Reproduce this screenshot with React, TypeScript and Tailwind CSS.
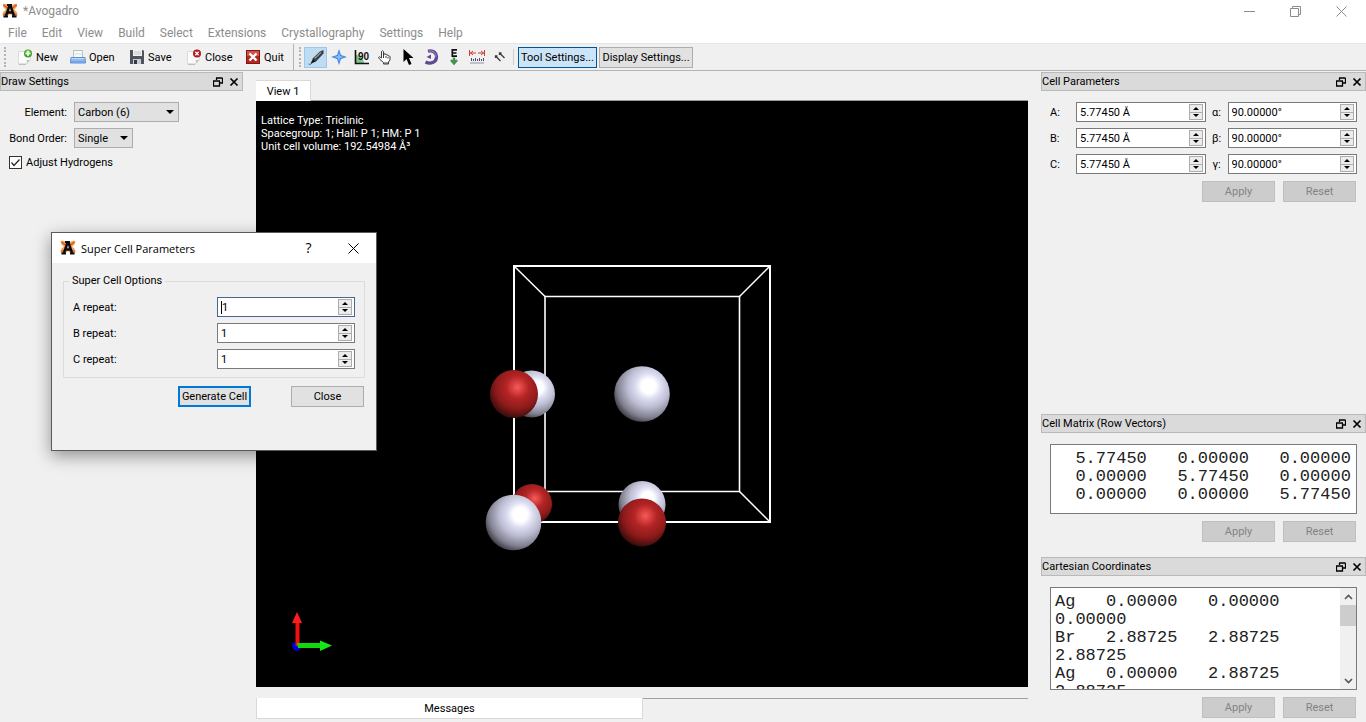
import React, { useState } from "react";

const MENUS = [
  "File",
  "Edit",
  "View",
  "Build",
  "Select",
  "Extensions",
  "Crystallography",
  "Settings",
  "Help",
];

const MATRIX = `  5.77450   0.00000   0.00000
  0.00000   5.77450   0.00000
  0.00000   0.00000   5.77450`;

const COORDINATES = `Ag   0.00000   0.00000   0.00000
Br   2.88725   2.88725   2.88725
Ag   0.00000   2.88725   2.88725
Br   2.88725   0.00000   0.00000
Ag   2.88725   0.00000   2.88725
Br   0.00000   2.88725   0.00000
Ag   2.88725   2.88725   0.00000
Br   0.00000   0.00000   2.88725`;

function Logo() {
  return (
    <svg width="16" height="16" viewBox="0 0 16 16" aria-hidden="true">
      <path
        d="M1 1c2-1 4 0 7 3 3-3 5-4 7-3 1 2-1 4-3 6 3 1 4 4 3 6-2 2-5 0-7-2-2 2-5 4-7 2-1-2 0-5 3-6C2 5 0 3 1 1Z"
        fill="#f0a05a"
      />
      <path d="M1.500 2l4 3M14.500 2l-4 3M1.500 12l3-2M14.500 12l-3-2" stroke="#c9601f" strokeWidth="1.500" />
      <path d="M4 13 7.500 2.500h1L12 13M5.500 9.500h5" fill="none" stroke="#0b0b14" strokeWidth="2.400" />
      <path d="M1.500 13.500h4.500M10 13.500h4.500M5 2h5" stroke="#0b0b14" strokeWidth="1.800" />
    </svg>
  );
}

function PageShape() {
  return (
    <>
      <path d="M1.500 2.500h12v8l-4 4.500h-8z" fill="#fbfbfb" stroke="#dcdcdc" strokeWidth="1" />
      <path d="M13.500 10.500c-1 .5-2.500.5-4 .5.500 1.500.5 3 0 4z" fill="#c2c2c2" />
      <path d="M2 15.300h7" stroke="#b5b5b5" strokeWidth="1" />
    </>
  );
}

function NewIcon() {
  return (
    <svg width="16" height="16" viewBox="0 0 16 16" aria-hidden="true">
      <PageShape />
      <circle cx="11" cy="4.500" r="4" fill="#3fa32c" />
      <circle cx="11" cy="3.500" r="2.500" fill="#7fd063" />
      <path d="M11 2v5M8.500 4.500h5" stroke="#fff" strokeWidth="1.500" />
    </svg>
  );
}

function OpenIcon() {
  return (
    <svg width="16" height="16" viewBox="0 0 16 16" aria-hidden="true">
      <path d="M3.500 9V1.500h9V9" fill="#fafafa" stroke="#b9bcc2" />
      <path d="M3.500 5h9" stroke="#d8dadd" />
      <path d="M1 8.500h14l.5 5.500h-15z" fill="#8fbbf1" stroke="#5b8dd6" />
      <path d="M1.500 9.500h13" stroke="#c4dcfa" />
      <path d="M1.500 12.500h13" stroke="#6fa3e6" />
    </svg>
  );
}

function SaveIcon() {
  return (
    <svg width="16" height="16" viewBox="0 0 16 16" aria-hidden="true">
      <path d="M1 1h13l1 1v13H1z" fill="#4d5560" />
      <path d="M4 1h9v6H4z" fill="#f3f3f3" />
      <path d="M5 3h7M5 5h7" stroke="#c4c4c4" />
      <path d="M4 10h8v5H4z" fill="#c9ccd0" />
      <path d="M5 11h3v4H5z" fill="#343a42" />
    </svg>
  );
}

function CloseFileIcon() {
  return (
    <svg width="16" height="16" viewBox="0 0 16 16" aria-hidden="true">
      <PageShape />
      <circle cx="11" cy="4.500" r="4" fill="#b01c1c" />
      <path d="M9.300 2.800l3.400 3.400M12.700 2.800 9.300 6.200" stroke="#fff" strokeWidth="1.300" />
    </svg>
  );
}

function QuitIcon() {
  return (
    <svg width="16" height="16" viewBox="0 0 16 16" aria-hidden="true">
      <rect x="1.500" y="1.500" width="13" height="13" fill="#b5261d" stroke="#7f1610" />
      <path d="M2 2h12v5H2z" fill="#cf5148" />
      <path d="M4.500 4.500l7 7M11.500 4.500l-7 7" stroke="#fff" strokeWidth="2.400" />
    </svg>
  );
}

const FILE_ACTIONS = [
  { label: "New", icon: <NewIcon />, width: "w-[53px]" },
  { label: "Open", icon: <OpenIcon />, width: "w-[59px]" },
  { label: "Save", icon: <SaveIcon />, width: "w-[57px]" },
  { label: "Close", icon: <CloseFileIcon />, width: "w-[59px]" },
  { label: "Quit", icon: <QuitIcon />, width: "w-[44px]" },
];

const TOOLS = [
  {
    name: "Draw",
    icon: (
      <>
        <path d="M.5 15c1.500 1 3 0 4-1.500" stroke="#666" fill="none" />
        <path d="M4.500 9.500 12 2.500 15.500 1 15.500 4.500 8 12.500z" fill="#363d43" />
        <path d="M6.500 9.500 13 3.500" stroke="#8f9aa3" strokeWidth="1.300" />
        <path d="M5 9.500 8 12.500 2.500 14.800z" fill="#15191c" />
      </>
    ),
  },
  {
    name: "Navigate",
    icon: (
      <>
        <path d="M8 0l2 6 6 2-6 2-2 6-2-6-6-2 6-2z" fill="#3d86e8" />
        <path d="M8 3l1 4 4 1-4 1-1 4-1-4-4-1 4-1z" fill="#8fbdf7" />
      </>
    ),
  },
  {
    name: "Bond Centric",
    icon: (
      <>
        <path d="M2 14V6c4 0 7 3 8 8z" fill="#7cc488" />
        <path d="M1.500 1v13.500H15" fill="none" stroke="#111" strokeWidth="1.600" />
        <text x="4" y="11" fontSize="10" fontWeight="bold" fill="#111" fontFamily="Liberation Sans">
          90
        </text>
      </>
    ),
  },
  {
    name: "Manipulate",
    icon: (
      <path
        d="M4.500 8V2.500q1-1.500 2 0V7l.5-2q1-1 1.800.2l.4.800q1-.8 1.800.2l.3.800q1.500-.5 1.700.8V11l-1.500 2v2H6.500v-1.500L3 10.500 1.500 8.500q.5-1.300 2-.3l1 1zM6.500 7v2M9 7v2M11 8v1.500M7 14h5"
        fill="#fff"
        stroke="#3c3c3c"
        strokeWidth="1"
      />
    ),
  },
  {
    name: "Selection",
    icon: <path d="M3.500 0v13l3-3 2.500 6 2.500-1-2.500-6H13.500z" fill="#000" />,
  },
  {
    name: "Auto Rotate",
    icon: (
      <>
        <path d="M5 2.200C10 .8 14 4 13.500 8.500 13 13.500 7.500 15.500 2.500 13" fill="none" stroke="#5c4a94" strokeWidth="3.200" />
        <path d="M6 2c4-.5 7 2 7 6" fill="none" stroke="#9d90c8" strokeWidth="1" />
        <path d="M3.500 8 8 5.500V10z" fill="#5c4a94" />
      </>
    ),
  },
  {
    name: "Auto Optimization",
    icon: (
      <>
        <path d="M11 .8H6.300v6.400H11M6 4h4.500" fill="none" stroke="#111" strokeWidth="1.700" />
        <path d="M8 8.500v5M5 11l3 3.500 3-3.500" fill="none" stroke="#45924f" strokeWidth="2.400" />
      </>
    ),
  },
  {
    name: "Measure",
    icon: (
      <>
        <path d="M.5 1v6M15.500 1v6M1 4h6M9 4h6M4 2 1.500 4 4 6M12 2l2.500 2L12 6" fill="none" stroke="#d03b3b" />
        <path d="M2.500 9v3M4.500 10v2M6.500 9v3M8.500 10v2M10.500 9v3M12.500 10v2M14.500 9v3" stroke="#444d66" />
        <path d="M1 14h14" stroke="#8d93a3" />
      </>
    ),
  },
  {
    name: "Align",
    icon: (
      <path d="M3.500 7 8.500 12M7.500 4l5 5M3.500 9V7h2M7.500 6V4h2" stroke="#3a3a3a" strokeWidth="1.300" fill="none" />
    ),
  },
];

function Handle() {
  return <span className="h-5 w-[3px] border-l-2 border-dotted border-[#b4b4b4]" />;
}

function DockTitle({ title }: { title: string }) {
  return (
    <div className="flex h-[19px] items-center justify-between border border-[#b9b9b9] bg-[#dadada] pr-[3px]">
      <h2>{title}</h2>
      <div className="flex items-center gap-[6px]">
        <button aria-label={`Float ${title}`}>
          <svg width="10" height="10" viewBox="0 0 10 10">
            <path d="M3 1h6.500M3.500 1v2M9.500 1v5H7M0 4h7M.5 4v5h6V4" fill="none" stroke="#000" strokeWidth="1.300" />
          </svg>
        </button>
        <button aria-label={`Close ${title}`}>
          <svg width="10" height="10" viewBox="0 0 10 10">
            <path d="M1.500 1.500l7 7M8.500 1.500l-7 7" stroke="#000" strokeWidth="1.700" />
          </svg>
        </button>
      </div>
    </div>
  );
}

function Steps({ label }: { label: string }) {
  return (
    <div className="flex h-4 w-[14px] shrink-0 flex-col border border-[#adadad] bg-[#ececec]">
      <button aria-label={`Increase ${label}`} className="flex flex-1 items-center justify-center border-b border-[#adadad]">
        <svg width="6" height="3" viewBox="0 0 6 3">
          <path d="M0 3 3 0 6 3z" />
        </svg>
      </button>
      <button aria-label={`Decrease ${label}`} className="flex flex-1 items-center justify-center">
        <svg width="6" height="3" viewBox="0 0 6 3">
          <path d="M0 0h6L3 3z" />
        </svg>
      </button>
    </div>
  );
}

function SpinBox({ id, label, value, active }: { id: string; label: string; value: string; active?: boolean }) {
  const [text, setText] = useState(value);
  return (
    <>
      <label htmlFor={id}>{label}:</label>
      <div
        className={
          "flex h-5 min-w-0 items-center border bg-white pr-[2px] pl-[3px] " +
          (active ? "border-[#46688f]" : "border-[#7a7a7a]")
        }
      >
        {active && <span className="h-[13px] w-px bg-black" />}
        <input
          id={id}
          className="min-w-0 flex-1 bg-transparent outline-none"
          value={text}
          onChange={(e) => setText(e.target.value)}
        />
        <Steps label={label} />
      </div>
    </>
  );
}

function Combo({ id, label, value, width }: { id: string; label: string; value: string; width: string }) {
  return (
    <>
      <label htmlFor={id} className="text-right whitespace-nowrap">
        {label}:
      </label>
      <div className={"relative " + width}>
        <select
          id={id}
          defaultValue={value}
          className="block h-5 w-full appearance-none border border-[#adadad] bg-[#e1e1e1] px-[3px] outline-none"
        >
          <option>{value}</option>
        </select>
        <svg className="pointer-events-none absolute top-2 right-[5px]" width="8" height="4" viewBox="0 0 8 4">
          <path d="M0 0h8L4 4z" />
        </svg>
      </div>
    </>
  );
}

function ApplyReset() {
  return (
    <div className="flex justify-end gap-2 pt-[7px] pr-px text-[#838383]">
      <button disabled className="h-[21px] w-[73px] border border-[#bfbfbf] bg-[#cccccc]">
        Apply
      </button>
      <button disabled className="h-[21px] w-[73px] border border-[#bfbfbf] bg-[#cccccc]">
        Reset
      </button>
    </div>
  );
}

function Scene() {
  return (
    <svg className="absolute inset-0 h-full w-full" viewBox="0 0 772 586" aria-label="Unit cell">
      <defs>
        <radialGradient id="silver" cx="0.62" cy="0.36" r="0.76">
          <stop offset="0" stopColor="#ffffff" />
          <stop offset="0.17" stopColor="#ffffff" />
          <stop offset="0.3" stopColor="#dedef2" />
          <stop offset="0.5" stopColor="#bcbcd2" />
          <stop offset="0.74" stopColor="#80808f" />
          <stop offset="1" stopColor="#121218" />
        </radialGradient>
        <radialGradient id="bromine" cx="0.57" cy="0.36" r="0.74">
          <stop offset="0" stopColor="#fa5a5a" />
          <stop offset="0.15" stopColor="#d84040" />
          <stop offset="0.32" stopColor="#b32424" />
          <stop offset="0.6" stopColor="#8e1b1b" />
          <stop offset="0.8" stopColor="#521010" />
          <stop offset="1" stopColor="#100202" />
        </radialGradient>
      </defs>

      {/* unit cell frame */}
      <g fill="none" stroke="#fff" strokeWidth="2">
        <path d="M258 165H514V421H258z" />
        <path d="M289 195.500H483.500V390.500H289z" strokeWidth="1.600" />
        <path d="M258 165l31 30.500M514 165l-30.500 30.500M514 421l-30.500-30.500" strokeWidth="1.500" />
      </g>

      <circle cx="275.500" cy="293" r="23.500" fill="url(#silver)" />
      <circle cx="258" cy="293" r="24" fill="url(#bromine)" />
      <circle cx="386" cy="293" r="27.800" fill="url(#silver)" />
      <circle cx="276" cy="403" r="20" fill="url(#bromine)" />
      <circle cx="257.500" cy="421.500" r="27.800" fill="url(#silver)" />
      <circle cx="386" cy="403.500" r="23.500" fill="url(#silver)" />
      <circle cx="386" cy="421.500" r="24" fill="url(#bromine)" />

      {/* axes */}
      <path d="M37 541q-2 5 1 8 3 2 6 0v-5z" fill="#0000d0" />
      <path d="M39.500 520h4v25h-4z" fill="#f01010" />
      <path d="M36 522 41 511l5 11z" fill="#ff1c1c" />
      <path d="M41 542h23v5H42z" fill="#0fd80f" />
      <path d="M64 539.500 76 544.500 64 550z" fill="#16e616" />
    </svg>
  );
}

function SuperCellDialog() {
  return (
    <div
      role="dialog"
      aria-label="Super Cell Parameters"
      className="absolute top-[232px] left-[51px] w-[326px] border border-[#5a5a5a] bg-[#f0f0f0] pb-[43px] shadow-[0_5px_16px_rgba(0,0,0,0.4)]"
    >
      <div className="flex h-[30px] items-center bg-white pl-2 font-['Open_Sans',sans-serif]">
        <Logo />
        <h2 className="flex-1 pl-[5px]">Super Cell Parameters</h2>
        <button aria-label="Help" className="w-[45px] text-sm">
          ?
        </button>
        <button aria-label="Close dialog" className="flex w-[45px] justify-center">
          <svg width="11" height="11" viewBox="0 0 11 11">
            <path d="M.5.5l10 10M10.500.5l-10 10" stroke="#000" />
          </svg>
        </button>
      </div>
      <div className="px-[11px] pt-[11px]">
        <fieldset className="border border-[#dcdcdc] px-[9px] pb-2">
          <legend className="-ml-1 px-[3px] leading-[14px]">Super Cell Options</legend>
          <div className="grid grid-cols-[1fr_138px] items-center gap-y-[6px] pt-[9px]">
            <SpinBox id="repeat-a" label="A repeat" value="1" active />
            <SpinBox id="repeat-b" label="B repeat" value="1" />
            <SpinBox id="repeat-c" label="C repeat" value="1" />
          </div>
        </fieldset>
        <div className="flex justify-end gap-10 pt-2 pr-px">
          <button className="h-[21px] w-[73px] border-2 border-[#0078d7] bg-[#e1e1e1] whitespace-nowrap">
            Generate Cell
          </button>
          <button className="h-[21px] w-[73px] border border-[#adadad] bg-[#e1e1e1]">Close</button>
        </div>
      </div>
    </div>
  );
}

export default function App() {
  const [tool, setTool] = useState("Draw");
  const [adjust, setAdjust] = useState(true);

  return (
    <div className="relative flex h-screen flex-col overflow-hidden bg-[#f0f0f0] font-[Roboto,sans-serif] text-[11px] leading-[13px] text-black">
      <header className="flex h-[22px] shrink-0 items-center bg-white pr-[2px] pl-[2px] text-xs text-[#8c8c8c]">
        <Logo />
        <h1 className="flex-1 pl-[5px]">*Avogadro</h1>
        <button aria-label="Minimize" className="flex w-[46px] justify-center">
          <svg width="11" height="11" viewBox="0 0 11 11" stroke="#8c8c8c">
            <path d="M0 5.500h11" />
          </svg>
        </button>
        <button aria-label="Restore" className="flex w-[46px] justify-center">
          <svg width="11" height="11" viewBox="0 0 11 11" fill="none" stroke="#8c8c8c">
            <path d="M.5 2.500h8v8h-8zM2.500 2.500v-2h8v8h-2" />
          </svg>
        </button>
        <button aria-label="Close window" className="flex w-[46px] justify-center">
          <svg width="11" height="11" viewBox="0 0 11 11" stroke="#8c8c8c">
            <path d="M.5.5l10 10M10.500.5l-10 10" />
          </svg>
        </button>
      </header>

      <nav className="flex h-[22px] shrink-0 items-center gap-[15px] border-b border-[#e6e6e6] bg-white pl-2 text-xs text-[#8c8c8c]">
        {MENUS.map((menu) => (
          <button key={menu}>{menu}</button>
        ))}
      </nav>

      <div className="flex h-[27px] shrink-0 items-center border-b border-[#b4b4b4] pl-1">
        <Handle />
        <div className="flex pl-[10px]">
          {FILE_ACTIONS.map((action) => (
            <button key={action.label} className={"flex items-center gap-[3px] " + action.width}>
              {action.icon}
              {action.label}
            </button>
          ))}
        </div>
        <span className="mr-[5px] ml-1 h-full w-px bg-[#b4b4b4]" />
        <Handle />
        <div className="flex pl-[2px]">
          {TOOLS.map((item) => (
            <button
              key={item.name}
              aria-label={item.name}
              onClick={() => setTool(item.name)}
              className={
                "flex h-[21px] w-[23px] items-center justify-center border " +
                (tool === item.name ? "border-[#99c9ef] bg-[#c0dcf3]" : "border-transparent")
              }
            >
              <svg width="16" height="16" viewBox="0 0 16 16" className="shrink-0">
                {item.icon}
              </svg>
            </button>
          ))}
        </div>
        <span className="mr-1 ml-[2px] h-4 w-px bg-[#cfcfcf]" />
        <button className="h-[21px] w-[79px] border border-[#00559b] bg-[#cce4f7] whitespace-nowrap">
          Tool Settings...
        </button>
        <button className="ml-[2px] h-[21px] w-[94px] border border-[#adadad] bg-[#e1e1e1] whitespace-nowrap">
          Display Settings...
        </button>
      </div>

      <div className="flex min-h-0 flex-1 gap-[13px] pt-px">
        <aside className="w-[243px] shrink-0">
          <DockTitle title="Draw Settings" />
          <div className="grid grid-cols-[59px_auto] items-center gap-x-[7px] gap-y-[6px] pt-[11px] pl-2">
            <Combo id="element" label="Element" value="Carbon (6)" width="w-[105px]" />
            <Combo id="bond-order" label="Bond Order" value="Single" width="w-[59px]" />
          </div>
          <label className="flex items-center gap-1 pt-2 pl-[9px]">
            <input
              type="checkbox"
              checked={adjust}
              onChange={(e) => setAdjust(e.target.checked)}
              className="peer sr-only"
            />
            <svg width="13" height="13" viewBox="0 0 13 13" className="peer-focus-visible:outline">
              <rect x="0.500" y="0.500" width="12" height="12" fill="#fff" stroke="#333" />
              {adjust && <path d="M2.500 6.500 5 9.500l5.500-6" fill="none" stroke="#222" strokeWidth="1.200" />}
            </svg>
            Adjust Hydrogens
          </label>
        </aside>

        <main className="flex min-w-0 flex-1 flex-col pt-2 pb-[3px]">
          <div className="flex">
            <button className="h-[21px] w-[55px] border-t border-r border-[#d9d9d9] bg-white">View 1</button>
            <span className="flex-1 border-b border-[#9a9a9a]" />
          </div>
          <div className="relative min-h-0 flex-1 bg-black">
            <Scene />
            <p className="relative pt-[13px] pl-[5px] text-white">
              Lattice Type: Triclinic
              <br />
              Spacegroup: 1; Hall: P 1; HM: P 1
              <br />
              Unit cell volume: 192.54984 Å³
            </p>
          </div>
          <div className="mt-[11px] flex">
            <button className="h-[21px] flex-1 border-x border-b border-[#d9d9d9] bg-white">Messages</button>
            <span className="flex-1 border-t border-[#a0a0a0]" />
          </div>
        </main>

        <aside className="flex w-[325px] shrink-0 flex-col pb-1">
          <section className="flex-1">
            <DockTitle title="Cell Parameters" />
            <div className="px-[9px] pt-[11px]">
              <div className="grid grid-cols-[26px_1fr_22px_1fr] items-center gap-y-[6px] [&>label:nth-of-type(even)]:text-center">
                <SpinBox id="cell-a" label="A" value="5.77450 Å" />
                <SpinBox id="cell-alpha" label="α" value="90.00000°" />
                <SpinBox id="cell-b" label="B" value="5.77450 Å" />
                <SpinBox id="cell-beta" label="β" value="90.00000°" />
                <SpinBox id="cell-c" label="C" value="5.77450 Å" />
                <SpinBox id="cell-gamma" label="γ" value="90.00000°" />
              </div>
              <ApplyReset />
            </div>
          </section>

          <section>
            <DockTitle title="Cell Matrix (Row Vectors)" />
            <div className="px-[9px] pt-[11px]">
              <textarea
                aria-label="Cell Matrix"
                defaultValue={MATRIX}
                className="block h-[70px] w-full resize-none overflow-hidden border border-[#7a7a7a] bg-white px-1 py-[5px] font-['Liberation_Mono',monospace] text-[17px] leading-[18px] whitespace-pre text-[#222] outline-none"
              />
              <ApplyReset />
            </div>
          </section>

          <section className="pt-[15px]">
            <DockTitle title="Cartesian Coordinates" />
            <div className="px-[9px] pt-[11px]">
              <div className="flex h-[103px] border border-[#7a7a7a] bg-white">
                <textarea
                  aria-label="Cartesian Coordinates"
                  defaultValue={COORDINATES}
                  className="block min-w-0 flex-1 resize-none overflow-hidden px-1 pt-[5px] font-['Liberation_Mono',monospace] text-[17px] leading-[18px] text-[#222] outline-none"
                />
                <div className="flex w-4 flex-col bg-[#f0f0f0]">
                  <button aria-label="Scroll up" className="flex h-[17px] items-center justify-center">
                    <svg width="9" height="6" viewBox="0 0 9 6">
                      <path d="M1 5l3.500-3.500L8 5" fill="none" stroke="#555" strokeWidth="1.600" />
                    </svg>
                  </button>
                  <span className="h-[21px] bg-[#cdcdcd]" />
                  <button aria-label="Scroll down" className="mt-auto flex h-[17px] items-center justify-center">
                    <svg width="9" height="6" viewBox="0 0 9 6">
                      <path d="M1 1l3.500 3.500L8 1" fill="none" stroke="#555" strokeWidth="1.600" />
                    </svg>
                  </button>
                </div>
              </div>
              <ApplyReset />
            </div>
          </section>
        </aside>
      </div>

      <SuperCellDialog />
    </div>
  );
}
